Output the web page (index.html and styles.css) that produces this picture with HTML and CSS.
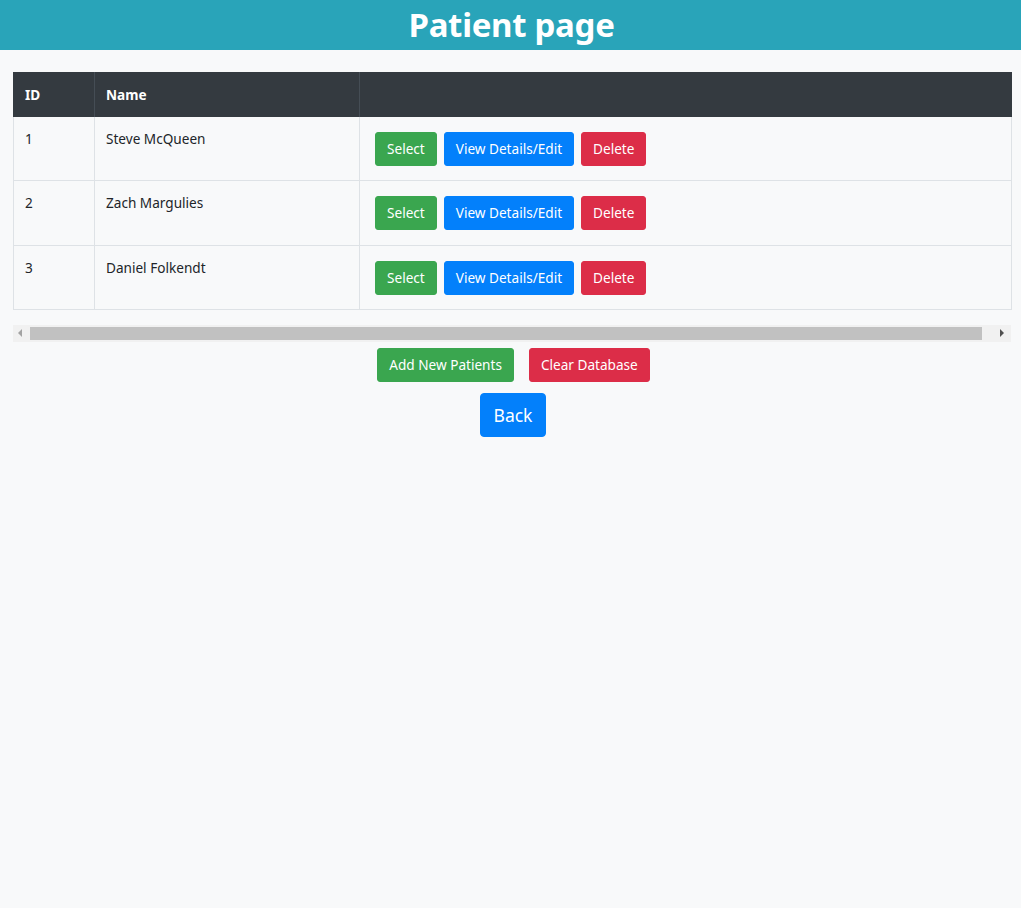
FILE: index.html
```html
<!DOCTYPE html>
<html>
<head>
<meta charset="utf-8">
<link rel="stylesheet" href="styles.css">
</head>
<body>
<header class="topbar"><h1 class="title">Patient page</h1></header>
<main class="content">
  <table class="patients">
    <colgroup><col class="c-id"><col class="c-name"><col></colgroup>
    <thead>
      <tr><th>ID</th><th>Name</th><th></th></tr>
    </thead>
    <tbody>
      <tr><td>1</td><td>Steve McQueen</td><td><div class="actions"><button class="btn green">Select</button><button class="btn blue">View Details/Edit</button><button class="btn red">Delete</button></div></td></tr>
      <tr><td>2</td><td>Zach Margulies</td><td><div class="actions"><button class="btn green">Select</button><button class="btn blue">View Details/Edit</button><button class="btn red">Delete</button></div></td></tr>
      <tr><td>3</td><td>Daniel Folkendt</td><td><div class="actions"><button class="btn green">Select</button><button class="btn blue">View Details/Edit</button><button class="btn red">Delete</button></div></td></tr>
    </tbody>
  </table>
  <div class="hscroll">
    <span class="arrow left"></span>
    <div class="thumb"></div>
    <span class="arrow right"></span>
  </div>
  <div class="bottom-row">
    <button class="btn green">Add New Patients</button>
    <button class="btn red">Clear Database</button>
  </div>
  <div class="back-row">
    <button class="btn blue large">Back</button>
  </div>
</main>
</body>
</html>
```
FILE: styles.css
```css
html, body { margin: 0; padding: 0; }
body {
  background: #f8f9fa;
  font-family: "Noto Sans", "Open Sans", sans-serif;
  font-size: 13.6px;
  line-height: 20px;
  color: #212529;
  min-height: 908px;
}
.topbar {
  background: #29a4b9;
  height: 50px;
  display: flex;
  justify-content: center;
  align-items: center;
}
.title {
  margin: 0;
  color: #fff;
  font-size: 33px;
  font-weight: 700;
  line-height: 44px;
  letter-spacing: -0.3px;
  padding-left: 2px;
}
.content {
  padding: 22px 9px 0 13px;
}
.patients {
  width: 999px;
  border-collapse: collapse;
  table-layout: fixed;
}
.c-id { width: 81px; }
.c-name { width: 265px; }
.patients th {
  background: #343a40;
  color: #fff;
  text-align: left;
  font-weight: 700;
  height: 44px;
  padding: 1px 11px 0;
  border: 1px solid #454d55;
  border-top: 0;
  border-bottom: 0;
}
.patients th:first-child { border-left: 1px solid #343a40; }
.patients th:last-child { border-right: 1px solid #343a40; }
.patients td {
  border: 1px solid #dee2e6;
  padding: 12px 11px;
  vertical-align: top;
}
.patients tbody tr:first-child td { border-top: 0; }
.actions {
  display: flex;
  gap: 7px;
  padding: 3px 3px 2.34px 4px;
}
.btn {
  font-family: inherit;
  font-size: 13.6px;
  line-height: 20px;
  color: #fff;
  border: 1px solid transparent;
  border-radius: 3px;
  padding: 6px 11px;
  cursor: pointer;
}
.green { background: #3aa64f; border-color: #3aa64f; }
.blue { background: #0380fb; border-color: #0380fb; }
.red { background: #dc2d48; border-color: #dc2d48; }
.hscroll {
  margin-top: 15px;
  width: 998px;
  height: 17px;
  background: #f1f1f1;
  display: flex;
  align-items: center;
}
.thumb {
  flex: 1;
  height: 13px;
  background: #c1c1c1;
  margin: 0 18px 0 8px;
}
.arrow {
  width: 0; height: 0;
  border-top: 4px solid transparent;
  border-bottom: 4px solid transparent;
}
.arrow.left { border-right: 4px solid #a3a3a3; margin-left: 5px; }
.arrow.right { border-left: 4px solid #505050; margin-right: 7px; }
.bottom-row {
  display: flex;
  justify-content: center;
  gap: 15px;
  margin-top: 6px;
  padding-left: 2px;
}
.back-row {
  display: flex;
  justify-content: center;
  margin-top: 11px;
  padding-left: 1px;
}
.btn.large {
  font-size: 17.5px;
  line-height: 26px;
  padding: 8px 13px;
  border-radius: 4px;
}
```
